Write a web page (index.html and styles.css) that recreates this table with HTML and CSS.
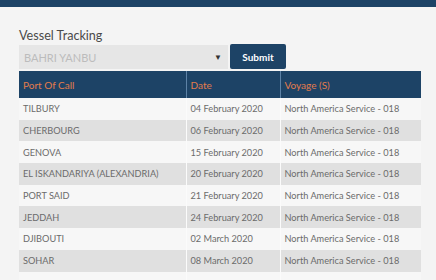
FILE: index.html
```html
<!DOCTYPE html>
<html>
<head>
    <title>Vessel Tracking</title>
    <link rel="stylesheet" href="styles.css">
</head>
<body>
    <div class="topbar"></div>
    <div class="tracking">
        <h2>Vessel Tracking</h2>
        <form class="search-row">
            <div class="vessel-select">
                <span>BAHRI YANBU</span>
                <span class="caret">&#9660;</span>
            </div>
            <button type="submit">Submit</button>
        </form>
        <table class="schedule">
            <thead>
                <tr>
                    <th class="col-port">Port Of Call</th>
                    <th class="col-date">Date</th>
                    <th>Voyage (S)</th>
                </tr>
            </thead>
            <tbody>
                <tr><td>TILBURY</td><td>04 February 2020</td><td>North America Service - 018</td></tr>
                <tr><td>CHERBOURG</td><td>06 February 2020</td><td>North America Service - 018</td></tr>
                <tr><td>GENOVA</td><td>15 February 2020</td><td>North America Service - 018</td></tr>
                <tr><td>EL ISKANDARIYA (ALEXANDRIA)</td><td>20 February 2020</td><td>North America Service - 018</td></tr>
                <tr><td>PORT SAID</td><td>21 February 2020</td><td>North America Service - 018</td></tr>
                <tr><td>JEDDAH</td><td>24 February 2020</td><td>North America Service - 018</td></tr>
                <tr><td>DJIBOUTI</td><td>02 March 2020</td><td>North America Service - 018</td></tr>
                <tr><td>SOHAR</td><td>08 March 2020</td><td>North America Service - 018</td></tr>
                <tr><td>&nbsp;</td><td>&nbsp;</td><td>&nbsp;</td></tr>
            </tbody>
        </table>
    </div>
</body>
</html>
```

FILE: styles.css
```css
:root {
    --navy: #1d4366;
    --orange: #e37c4c;
    --page: #f4f4f4;
    --row-light: #f7f7f7;
    --row-dark: #e0e0e0;
    --text: #6b6b6b;
}

* { box-sizing: border-box; margin: 0; padding: 0; }

body {
    background: var(--page);
    font-family: Lato, "Open Sans", sans-serif;
    color: var(--text);
    overflow: hidden;
}

.topbar {
    height: 7px;
    background: var(--navy);
}

.tracking {
    width: 402px;
    margin-left: 19px;
    padding-top: 20px;
}

h2 {
    font-size: 12.6px;
    font-weight: 400;
    line-height: 17px;
    color: #4a4a4a;
}

.search-row {
    display: flex;
    align-items: flex-end;
    gap: 2px;
    margin-top: 0;
}

.vessel-select {
    width: 209px;
    height: 24px;
    background: #e6e6e6;
    display: flex;
    align-items: center;
    justify-content: space-between;
    padding: 0 5px;
    font-size: 11px;
    color: #bcbcbc;
}

.caret {
    font-size: 8px;
    color: #333;
    margin-right: 1px;
}

button {
    width: 56px;
    height: 25px;
    background: var(--navy);
    border: none;
    border-radius: 2px;
    color: #fff;
    font-family: inherit;
    font-size: 10px;
    font-weight: 700;
}

.schedule {
    width: 402px;
    margin-top: 2px;
    border-collapse: collapse;
    table-layout: fixed;
    font-size: 9.2px;
}

.schedule th {
    background: var(--navy);
    color: var(--orange);
    font-weight: 400;
    font-size: 10px;
    text-align: left;
    height: 27px;
    padding: 0 4px;
    border-left: 1px solid #5d82a6;
}

.schedule th:first-child { border-left: none; }

.col-port { width: 167px; }
.col-date { width: 94px; }

.schedule td {
    height: 21.7px;
    padding: 0 4px;
    border-left: 1px solid #fbfbfb;
    white-space: nowrap;
}

.schedule td:first-child { border-left: none; }

.schedule tbody tr:nth-child(odd) td { background: var(--row-light); }
.schedule tbody tr:nth-child(even) td { background: var(--row-dark); }
```
